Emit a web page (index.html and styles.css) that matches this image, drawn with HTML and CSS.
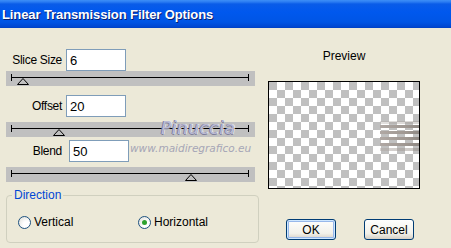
FILE: index.html
```html
<!DOCTYPE html>
<html lang="en">
<head>
    <meta charset="UTF-8">
    <title>Linear Transmission Filter Options</title>
    <link rel="stylesheet" href="styles.css">
</head>
<body>
    <div class="window">
        <!-- title bar -->
        <div class="titlebar">Linear Transmission Filter Options</div>

        <div class="dialog">
            <!-- left: settings -->
            <div class="settings">
                <div class="field field-first">
                    <label>Slice Size</label>
                    <input type="text" value="6">
                </div>
                <div class="slider">
                    <div class="track"></div>
                    <svg class="thumb" style="left: 11px" width="12" height="8" viewBox="0 0 12 8">
                        <polygon points="6,0.5 11.5,6.5 0.5,6.5" fill="none" stroke="#000"/>
                    </svg>
                </div>

                <div class="field field-mid">
                    <label>Offset</label>
                    <input type="text" value="20">
                </div>
                <div class="slider slider-mid">
                    <div class="track"></div>
                    <svg class="thumb" style="left: 47px" width="12" height="8" viewBox="0 0 12 8">
                        <polygon points="6,0.5 11.5,6.5 0.5,6.5" fill="none" stroke="#000"/>
                    </svg>
                    <span class="mark-name">Pinuccia</span>
                </div>

                <div class="field field-last">
                    <label>Blend</label>
                    <input type="text" value="50" class="wide-gap">
                    <span class="mark-url">www.maidiregrafico.eu</span>
                </div>
                <div class="slider slider-mid">
                    <div class="track"></div>
                    <svg class="thumb" style="left: 179px" width="12" height="8" viewBox="0 0 12 8">
                        <polygon points="6,0.5 11.5,6.5 0.5,6.5" fill="none" stroke="#000"/>
                    </svg>
                </div>

                <fieldset class="group">
                    <legend>Direction</legend>
                    <div class="radios">
                        <label class="radio"><span class="dot"></span>Vertical</label>
                        <label class="radio"><span class="dot checked"></span>Horizontal</label>
                    </div>
                </fieldset>
            </div>

            <!-- right: preview -->
            <div class="preview-side">
                <div class="preview-label">Preview</div>
                <div class="preview">
                    <div class="streak" style="top: 39px; opacity: .35"></div>
                    <div class="streak" style="top: 43px"></div>
                    <div class="streak" style="top: 49px"></div>
                    <div class="streak" style="top: 55px"></div>
                    <div class="streak" style="top: 61px"></div>
                    <div class="streak" style="top: 66px; opacity: .5"></div>
                </div>
                <div class="buttons">
                    <button class="btn btn-default">OK</button>
                    <button class="btn">Cancel</button>
                </div>
            </div>
        </div>
    </div>
</body>
</html>
```

FILE: styles.css
```css
/* base */
body {
    margin: 0;
    background: #ece9d8;
    font-family: "Liberation Sans", Arial, sans-serif;
    font-size: 12px;
    color: #000;
}

.window {
    width: 451px;
    height: 248px;
    overflow: hidden;
}

/* title bar */
.titlebar {
    height: 28px;
    display: flex;
    align-items: center;
    padding-left: 2px;
    color: #fff;
    font-weight: bold;
    font-size: 13px;
    letter-spacing: -0.1px;
    text-shadow: 1px 1px 0 #0a1e6e;
    background: linear-gradient(#3d8ff7 0, #2a7bf2 2px, #0a5ce8 4px, #0058ee 12px, #0055e5 22px, #0046d0 27px, #003fc0 28px);
}

.dialog {
    display: flex;
}

/* left side */
.settings {
    width: 252px;
    padding-left: 6px;
}

.field {
    display: flex;
    align-items: center;
    height: 22px;
    position: relative;
}

.field-first { margin-top: 21px; }
.field-mid   { margin-top: 9px; }
.field-last  { margin-top: 3px; }

.field label {
    width: 56px;
    text-align: right;
    margin-right: 4px;
    font-size: 12px;
    letter-spacing: -0.3px;
}

.field input {
    width: 60px;
    height: 22px;
    box-sizing: border-box;
    border: 1px solid #7f9db9;
    background: #fff;
    padding: 0 3px;
    font-family: "Liberation Sans", Arial, sans-serif;
    font-size: 13px;
    outline: none;
}

.field input.wide-gap {
    margin-left: 3px;
}

.slider {
    position: relative;
    width: 249px;
    height: 15px;
    box-sizing: border-box;
    padding: 6px 6px 0 5px;
    background: #c0c0c0;
}

.slider-mid {
    margin-top: 5px;
}

.track {
    position: relative;
    height: 1px;
    background: #000;
}

.track::before,
.track::after {
    content: "";
    position: absolute;
    top: -3px;
    width: 1px;
    height: 7px;
    background: #000;
}

.track::before { left: 0; }
.track::after  { right: 0; }

.thumb {
    position: absolute;
    top: 7px;
}

/* watermark over the sliders */
.mark-name {
    position: absolute;
    left: 155px;
    top: -4px;
    font-family: "DejaVu Sans", sans-serif;
    font-size: 17px;
    font-style: italic;
    color: #bcbcd4;
    letter-spacing: 0.5px;
    text-shadow: -1px 0 #7e7e9a, 0 1px #7e7e9a, 1px 0 #eeeef6;
}

.mark-url {
    position: absolute;
    left: 124px;
    top: 2px;
    font-family: "DejaVu Sans", sans-serif;
    font-size: 10.5px;
    font-style: italic;
    color: #a6a6b6;
}

/* direction group */
.group {
    margin: 6px 0 0 0;
    width: 252px;
    height: 55px;
    box-sizing: border-box;
    padding: 0;
    border: 1px solid #d0d0bf;
    border-radius: 4px;
}

.group legend {
    margin-left: 5px;
    padding: 0 2px;
    color: #0046d5;
    font-size: 12px;
}

.radios {
    display: flex;
    padding: 13px 0 0 11px;
}

.radio {
    display: flex;
    align-items: center;
    font-size: 12px;
    width: 120px;
}

.dot {
    width: 11px;
    height: 11px;
    border: 1px solid #1c5180;
    border-radius: 50%;
    background: radial-gradient(circle at 70% 70%, #fff 30%, #dcdcd6 100%);
    margin-right: 3px;
    position: relative;
}

.dot.checked::after {
    content: "";
    position: absolute;
    left: 3px;
    top: 3px;
    width: 5px;
    height: 5px;
    border-radius: 50%;
    background: #2ea22e;
}

/* right side */
.preview-side {
    flex: 1;
    padding-left: 10px;
}

.preview-label {
    width: 152px;
    margin-top: 21px;
    height: 14px;
    text-align: center;
    font-size: 12px;
}

.preview {
    position: relative;
    margin-top: 18px;
    width: 152px;
    height: 108px;
    box-sizing: border-box;
    border: 1px solid #000;
    background-color: #fff;
    background-image:
        linear-gradient(45deg, #c0c0c0 25%, transparent 25%, transparent 75%, #c0c0c0 75%),
        linear-gradient(45deg, #c0c0c0 25%, transparent 25%, transparent 75%, #c0c0c0 75%);
    background-size: 16px 16px;
    background-position: 8px 0, 0 8px;
}

.streak {
    position: absolute;
    left: 111px;
    right: 0;
    height: 3px;
    background: linear-gradient(90deg, #b0a8a4, #9e9690 70%, #8e8884);
}

.buttons {
    display: flex;
    gap: 28px;
    margin-top: 30px;
    padding-left: 18px;
}

.btn {
    width: 50px;
    height: 21px;
    padding: 0;
    border: 1px solid #003c74;
    border-radius: 3px;
    background: linear-gradient(#fefefd, #f2f1ea 70%, #d6d0c5);
    font-family: "Liberation Sans", Arial, sans-serif;
    font-size: 12px;
    color: #000;
}

.btn-default {
    box-shadow: inset 0 0 0 1px #cee7ff, inset 0 0 0 2px #98b8ea;
}
```
